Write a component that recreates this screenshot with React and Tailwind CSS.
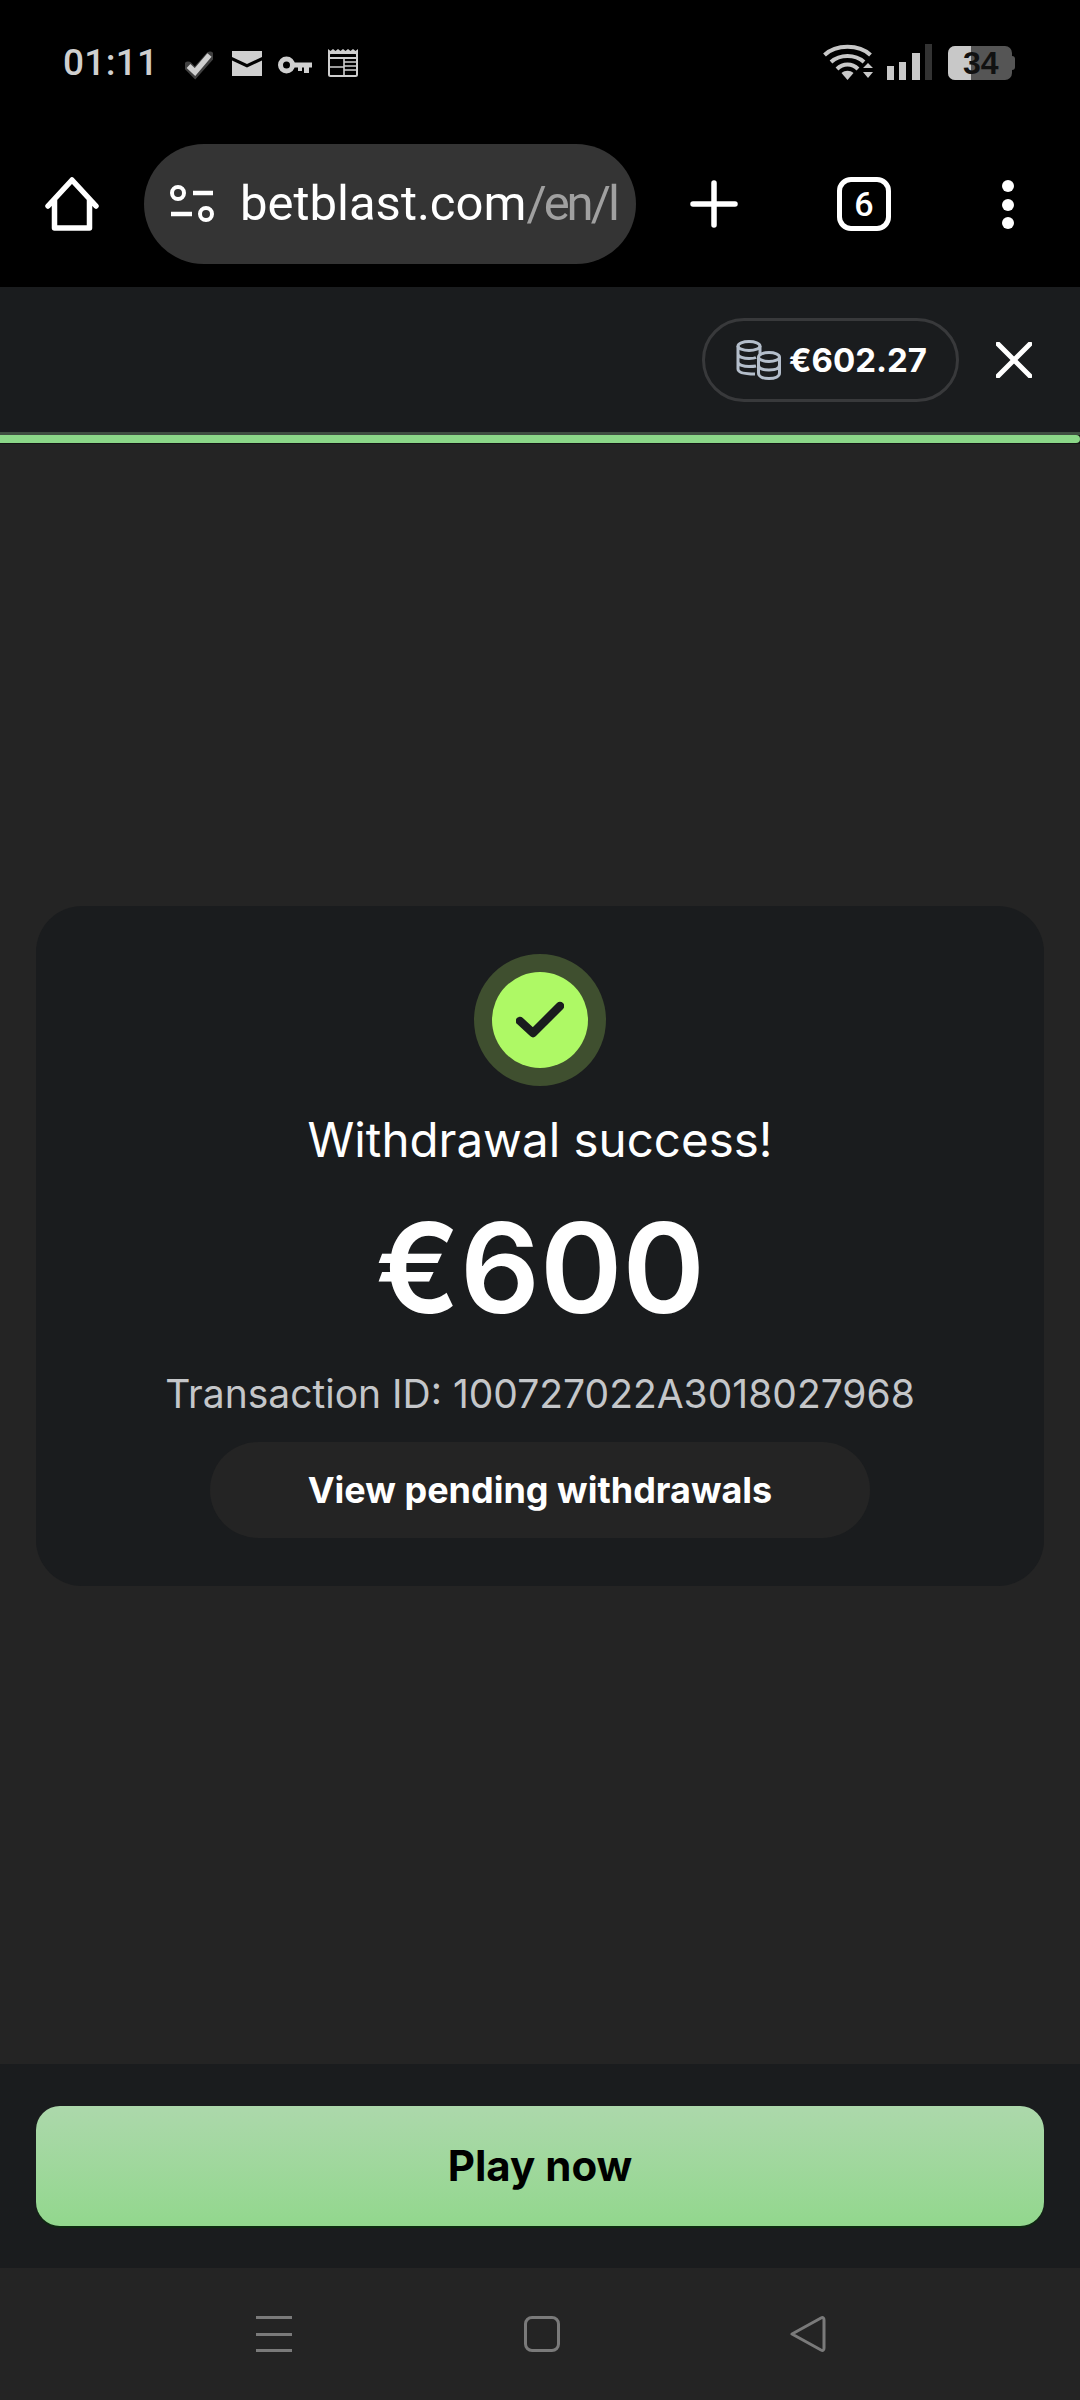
export default function App() {
  return (
    <div className="flex h-[2400px] w-[1080px] flex-col overflow-hidden bg-[#242424] font-['Inter',sans-serif] text-white">
      {/* Status bar */}
      <div className="flex h-[144px] shrink-0 items-start bg-black pl-[63px] pr-[65px] pt-[44px]">
        <span className="mt-[-3px] w-[92px] font-['Roboto',sans-serif] text-[37px] font-medium leading-[44px] tracking-[0.3px] text-[#cfcfcf]">01:11</span>
        <div className="ml-[30px] flex items-start">
          <svg width="28" height="36" viewBox="0 0 28 36" className="mt-[2px]">
            <path d="M3 20 L10 27 L25 10" fill="none" stroke="#fff" strokeOpacity="0.25" strokeWidth="9" strokeLinecap="round" />
            <path d="M3.5 20 L10 26 L24.5 9" fill="none" stroke="#cfcfcf" strokeWidth="5.5" />
          </svg>
          <svg width="30" height="25" viewBox="0 0 30 25" className="ml-[19px] mt-[7px]">
            <path d="M0 0H30V6L15 13L0 6ZM0 9.5L15 16.5L30 9.5V25H0Z" fill="#cfcfcf" />
          </svg>
          <svg width="34" height="18" viewBox="0 0 34 18" className="ml-[16px] mt-[12px]">
            <circle cx="8.5" cy="9" r="6" fill="none" stroke="#cfcfcf" strokeWidth="5" />
            <path d="M14 6.5H34V11.5H31V17H26V11.5H24V15H20V11.5H14Z" fill="#cfcfcf" />
          </svg>
          <svg width="30" height="28" viewBox="0 0 30 28" className="ml-[16px] mt-[5px]">
            <path d="M0 0 L2.5 2 L5 0 L7.5 2 L10 0 L12.5 2 L15 0 L17.5 2 L20 0 L22.5 2 L25 0 L27.5 2 L30 0 V5 H0Z" fill="#cfcfcf" />
            <rect x="1" y="4" width="28" height="23" rx="1.5" fill="none" stroke="#cfcfcf" strokeWidth="2" />
            <path d="M1 9H29" stroke="#cfcfcf" strokeWidth="2" />
            <path d="M16 9V26M16 13H29M16 17H29M16 21H29M2 18H16" stroke="#cfcfcf" strokeWidth="1.6" fill="none" />
          </svg>
        </div>
        <div className="ml-auto flex items-start">
          <svg width="50" height="36" viewBox="0 0 50 36">
            <path d="M1.5 11 C13 0 36 0 47.5 11" fill="none" stroke="#c8c8c8" strokeWidth="4" />
            <path d="M8 18 C17 10 32 10 41 18" fill="none" stroke="#c8c8c8" strokeWidth="4" />
            <path d="M14 25 C20 19 29 19 35 25" fill="none" stroke="#c8c8c8" strokeWidth="4" />
            <path d="M18.5 29 C22 26 27 26 30.5 29 L24.5 36Z" fill="#c8c8c8" />
            <path d="M40 24 L45 19 L50 24ZM40 28 H50 L45 34Z" fill="#c8c8c8" />
          </svg>
          <div className="ml-[14px] flex h-[36px] items-end gap-[5.5px]">
            <div className="h-[14px] w-[7px] bg-[#c8c8c8]" />
            <div className="h-[18px] w-[7px] bg-[#c8c8c8]" />
            <div className="h-[27px] w-[8px] bg-[#c8c8c8]" />
            <div className="h-[36px] w-[7px] bg-[#333333]" />
          </div>
          <div className="relative ml-[16px] mt-[2px] flex h-[34px] w-[64px] overflow-hidden rounded-[7px] bg-[#555555]">
            <div className="h-full w-[23px] bg-[#c8c8c8]" />
            <span className="absolute inset-0 pl-[15px] font-['Liberation_Sans',sans-serif] text-[32px] font-bold leading-[34px] text-[#111111]">34</span>
          </div>
          <div className="mt-[12px] h-[14px] w-[3px] rounded-r-[3px] bg-[#555555]" />
        </div>
      </div>

      {/* Browser toolbar */}
      <div className="flex h-[143px] shrink-0 items-start bg-black">
        <svg width="54" height="54" viewBox="0 0 54 54" className="ml-[45px] mt-[33px]">
          <path d="M3 29 L27 3 L51 29 M9.5 23 V51 H44.5 V23" fill="none" stroke="#fff" strokeWidth="5.5" strokeLinejoin="round" strokeLinecap="round" />
        </svg>
        <div className="ml-[45px] flex h-[120px] w-[492px] items-center overflow-hidden rounded-full bg-[#343434] pl-[26px] pr-[20px]">
          <svg width="44" height="38" viewBox="0 0 44 38" className="shrink-0">
            <circle cx="8" cy="8" r="6" fill="none" stroke="#fff" strokeWidth="4" />
            <path d="M23 8 H43 M1 29 H22" stroke="#fff" strokeWidth="4.5" />
            <circle cx="36" cy="29" r="6" fill="none" stroke="#fff" strokeWidth="4" />
          </svg>
          <div className="ml-[26px] whitespace-nowrap font-['Roboto',sans-serif] text-[49px] font-normal leading-[60px]">
            betblast.com<span className="tracking-[-3px] text-[#a0a0a0]">/en/l</span>
          </div>
        </div>
        <svg width="48" height="48" viewBox="0 0 48 48" className="ml-[54px] mt-[36px]">
          <path d="M3 24 H45 M24 3 V45" stroke="#fff" strokeWidth="5.5" strokeLinecap="round" />
        </svg>
        <div className="ml-[99px] mt-[33px] flex h-[54px] w-[54px] items-center justify-center rounded-[14px] border-[5px] border-white font-['Roboto',sans-serif] text-[34px] font-medium leading-none">6</div>
        <div className="ml-[111px] mt-[36px] flex flex-col gap-[6.5px]">
          <div className="size-[12px] rounded-full bg-white" />
          <div className="size-[12px] rounded-full bg-white" />
          <div className="size-[12px] rounded-full bg-white" />
        </div>
      </div>

      {/* Page header */}
      <div className="flex h-[145px] shrink-0 items-start justify-end bg-[#1a1c1e] pr-[48px] pt-[31px]">
        <div className="flex h-[84px] w-[257px] items-center rounded-full border-[3px] border-[#38393b] pl-[31px]">
          <svg width="45" height="40" viewBox="0 0 45 40" fill="none" stroke="#b4becb" strokeWidth="3" className="shrink-0">
            <ellipse cx="13" cy="6" rx="11" ry="4.5" />
            <path d="M2 6 V29 C2 32 7 34 19 34 M24 6 V15 M2 14 C2 17 8 18.5 13 18.5 C16 18.5 19 18 20 17.5 M2 22 C2 25 8 26.5 13 26.5 C15 26.5 18 26.5 20 26" />
            <ellipse cx="33" cy="17" rx="10.5" ry="4.5" />
            <path d="M22.5 17 V33 C22.5 36.5 27 38.5 33 38.5 C39 38.5 43.5 36.5 43.5 33 V17 M22.5 25 C22.5 28.5 27 30 33 30 C39 30 43.5 28.5 43.5 25" />
          </svg>
          <span className="ml-[8px] text-[33px] font-bold leading-none">€602.27</span>
        </div>
        <svg width="36" height="36" viewBox="0 0 36 36" className="ml-[37px] mt-[24px]">
          <path d="M2 2 L34 34 M34 2 L2 34" stroke="#fff" strokeWidth="5" strokeLinecap="round" />
        </svg>
      </div>

      {/* Progress */}
      <div className="h-[12px] shrink-0 bg-[#141614]">
        <div className="h-[3px] w-full bg-[#3f4e41]" />
        <div className="h-[8px] w-full rounded-r-full bg-[#8bd788]" />
      </div>

      {/* Main */}
      <div className="flex min-h-0 flex-1 items-center justify-center bg-[#242424] px-[36px] pb-[16px]">
        <div className="flex h-[680px] w-full flex-col items-center rounded-[46px] bg-[#1a1c1e] pt-[48px]">
          <div className="flex size-[132px] shrink-0 items-center justify-center rounded-full bg-[#3f4f2f]">
            <div className="flex size-[96px] items-center justify-center rounded-full bg-[#aef965]">
              <svg width="48" height="40" viewBox="0 0 48 40">
                <path d="M4 21 L17 33 L44 6" fill="none" stroke="#1a1c1e" strokeWidth="8.5" strokeLinecap="round" strokeLinejoin="round" />
              </svg>
            </div>
          </div>
          <div className="mt-[25px] text-[47.5px] font-normal leading-[58px]">Withdrawal success!</div>
          <div className="mt-[34px] text-[125px] font-semibold leading-[130px]">€600</div>
          <div className="mt-[37px] text-[39px] font-normal leading-[48px] text-[#c4c6c9]">Transaction ID: 100727022A3018027968</div>
          <div className="mt-[24px] flex h-[96px] w-[660px] items-center justify-center rounded-[48px] bg-[#242424] text-[36px] font-bold">View pending withdrawals</div>
        </div>
      </div>

      {/* Play now */}
      <div className="flex h-[204px] shrink-0 items-center bg-[#1a1c1e] px-[36px]">
        <div className="flex h-[120px] w-full items-center justify-center rounded-[24px] bg-gradient-to-b from-[#acd8ab] to-[#92d78d] pb-[2px] text-[42px] font-bold text-black shadow-[0_2px_0_#0e2a10]">Play now</div>
      </div>

      {/* Nav bar */}
      <div className="flex h-[132px] shrink-0 items-start bg-[#242424] pl-[256px] pt-[48px]">
        <div className="flex h-[36px] w-[36px] flex-col justify-between">
          <div className="h-[3px] w-full bg-[#7a7a7a]" />
          <div className="h-[3px] w-full bg-[#7a7a7a]" />
          <div className="h-[3px] w-full bg-[#7a7a7a]" />
        </div>
        <div className="ml-[232px] h-[36px] w-[36px] rounded-[8px] border-[3px] border-[#7a7a7a]" />
        <svg width="36" height="36" viewBox="0 0 36 36" className="ml-[230px]">
          <path d="M2 18 L31 2 C33 1 34 2 34 4 V32 C34 34 33 35 31 34 Z" fill="none" stroke="#7a7a7a" strokeWidth="3" strokeLinejoin="round" />
        </svg>
      </div>
    </div>
  );
}
